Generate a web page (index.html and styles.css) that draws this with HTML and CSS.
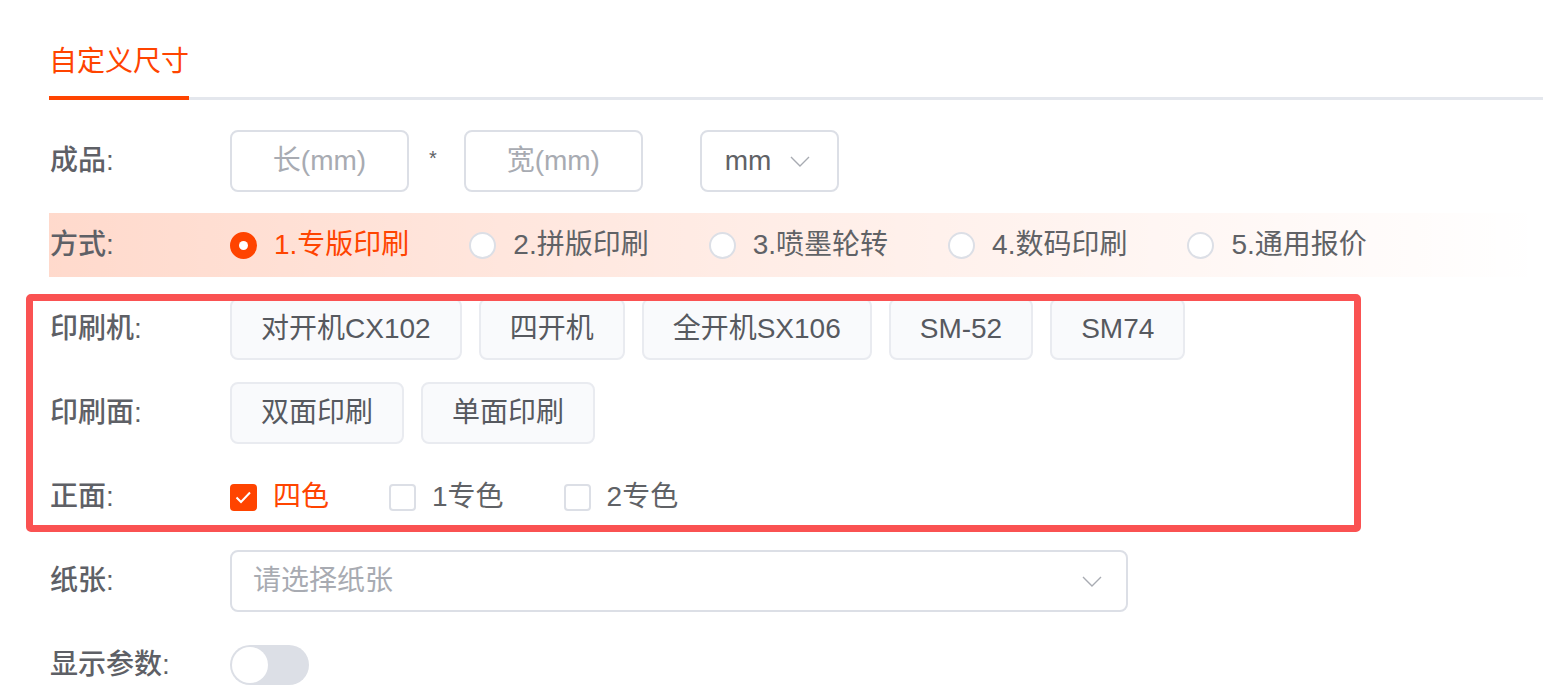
FILE: index.html
```html
<!DOCTYPE html>
<html lang="zh-CN">
<head>
<meta charset="utf-8">
<title>自定义尺寸</title>
<link rel="stylesheet" href="styles.css">
</head>
<body>
<div class="page">
  <div class="tabs">
    <div class="tab active">自定义尺寸</div>
  </div>

  <div class="form">
    <div class="row">
      <div class="label">成品:</div>
      <div class="field">
        <div class="input center"><span class="ph">长(mm)</span></div>
        <span class="star">*</span>
        <div class="input center"><span class="ph">宽(mm)</span></div>
        <div class="select unit">
          <span class="val">mm</span>
          <svg class="chev" width="20" height="11" viewBox="0 0 20 11"><path d="M1 1l9 9 9-9" fill="none" stroke="#a8abb2" stroke-width="1.4"/></svg>
        </div>
      </div>
    </div>

    <div class="row row-mode">
      <div class="label">方式:</div>
      <div class="field">
        <label class="radio checked"><span class="dot"></span><span>1.专版印刷</span></label>
        <label class="radio"><span class="dot"></span><span>2.拼版印刷</span></label>
        <label class="radio"><span class="dot"></span><span>3.喷墨轮转</span></label>
        <label class="radio"><span class="dot"></span><span>4.数码印刷</span></label>
        <label class="radio"><span class="dot"></span><span>5.通用报价</span></label>
      </div>
    </div>

    <div class="group">
      <div class="row">
        <div class="label">印刷机:</div>
        <div class="field">
          <div class="btn">对开机CX102</div>
          <div class="btn">四开机</div>
          <div class="btn">全开机SX106</div>
          <div class="btn">SM-52</div>
          <div class="btn">SM74</div>
        </div>
      </div>
      <div class="row">
        <div class="label">印刷面:</div>
        <div class="field">
          <div class="btn">双面印刷</div>
          <div class="btn">单面印刷</div>
        </div>
      </div>
      <div class="row">
        <div class="label">正面:</div>
        <div class="field">
          <label class="check checked"><span class="box"><svg width="27" height="27" viewBox="0 0 27 27"><path d="M6.5 13.5l4.5 4.5 9-9.5" fill="none" stroke="#fff" stroke-width="2"/></svg></span><span>四色</span></label>
          <label class="check"><span class="box"></span><span>1专色</span></label>
          <label class="check"><span class="box"></span><span>2专色</span></label>
        </div>
      </div>
    </div>

    <div class="row">
      <div class="label">纸张:</div>
      <div class="field">
        <div class="select paper">
          <span class="ph">请选择纸张</span>
          <svg class="chev" width="20" height="11" viewBox="0 0 20 11"><path d="M1 1l9 9 9-9" fill="none" stroke="#a8abb2" stroke-width="1.4"/></svg>
        </div>
      </div>
    </div>

    <div class="row">
      <div class="label">显示参数:</div>
      <div class="field">
        <div class="switch"><span class="knob"></span></div>
      </div>
    </div>
  </div>
</div>
</body>
</html>
```
FILE: styles.css
```css
html, body {
  margin: 0;
  padding: 0;
  background: #ffffff;
}
body {
  font-family: "Liberation Sans", "Noto Sans CJK SC", sans-serif;
  color: #606266;
  font-size: 28px;
  overflow: hidden;
}
.page {
  margin: 0 25px 0 49px;
}
.tabs {
  margin-top: 36px;
  height: 61px;
  display: flex;
  align-items: flex-start;
  border-bottom: 3px solid #e4e7ed;
}
.tab {
  box-sizing: border-box;
  width: 140px;
  height: 64px;
  line-height: 52px;
  padding-bottom: 8px;
  padding-left: 0;
  color: #ff4400;
  font-size: 28px;
  border-bottom: 4px solid #ff4400;
}
.form {
  padding-top: 30px;
}
.row {
  display: flex;
  align-items: center;
  min-height: 62px;
  margin-bottom: 22px;
}
.label {
  width: 181px;
  flex: none;
  padding-left: 1px;
  box-sizing: border-box;
  line-height: 1;
  color: #5e6066;
  font-weight: 500;
}
.field {
  display: flex;
  align-items: center;
  line-height: 1;
}
.row-mode {
  margin-top: -1px;
  margin-bottom: 21px;
  min-height: 64px;
  background: linear-gradient(90deg, rgba(255, 68, 0, 0.2) 0%, rgba(255, 68, 0, 0.1) 45%, rgba(255, 68, 0, 0) 100%);
}
.input, .select {
  box-sizing: border-box;
  height: 62px;
  border: 2px solid #dcdfe6;
  border-radius: 8px;
  background: #fff;
  display: flex;
  align-items: center;
}
.input {
  width: 179px;
}
.center {
  justify-content: center;
}
.ph {
  color: #a8abb2;
}
.star {
  font-size: 20px;
  margin: -6px 27px 0 20px;
  color: #606266;
}
.unit {
  width: 139px;
  margin-left: 57px;
  padding: 0 27px 0 23px;
}
.unit .val {
  color: #606266;
}
.chev {
  margin-left: auto;
  display: block;
}
.paper {
  width: 898px;
  padding: 0 24px 0 21px;
}
.radio {
  display: flex;
  align-items: center;
  margin-right: 60px;
  color: #606266;
}
.radio .dot {
  box-sizing: border-box;
  width: 27px;
  height: 27px;
  border-radius: 50%;
  border: 2px solid #dcdfe6;
  background: #fff;
  margin-right: 17px;
  position: relative;
}
.radio.checked {
  color: #ff4400;
}
.radio.checked .dot {
  background: #ff4400;
  border-color: #ff4400;
}
.radio.checked .dot::after {
  content: "";
  position: absolute;
  left: 50%;
  top: 50%;
  width: 9px;
  height: 9px;
  margin: -4.5px 0 0 -4.5px;
  border-radius: 50%;
  background: #fff;
}
.group {
  position: relative;
  display: flex;
  flex-direction: column;
  gap: 22px;
  margin-bottom: 22px;
}
.group .row {
  margin-bottom: 0;
}
.group::after {
  content: "";
  position: absolute;
  top: -4px;
  left: -23px;
  right: 182px;
  bottom: -4px;
  border: 7px solid #fa5252;
  border-radius: 5px;
  pointer-events: none;
}
.btn {
  box-sizing: border-box;
  height: 62px;
  padding: 0 29px;
  border: 2px solid #e9ebf0;
  border-radius: 8px;
  background: #f9fafc;
  display: flex;
  align-items: center;
  margin-right: 17px;
  color: #56595f;
  font-weight: 400;
}
.check {
  display: flex;
  align-items: center;
  margin-right: 60px;
  color: #606266;
}
.check .box {
  box-sizing: border-box;
  width: 27px;
  height: 27px;
  border: 2px solid #dcdfe6;
  border-radius: 4px;
  background: #fff;
  margin-right: 16px;
  position: relative;
}
.check .box svg {
  position: absolute;
  left: -2px;
  top: -2px;
}
.check.checked {
  color: #ff4400;
}
.check.checked .box {
  background: #ff4400;
  border-color: #ff4400;
}
.switch {
  box-sizing: border-box;
  width: 79px;
  height: 40px;
  border-radius: 20px;
  background: #dcdfe6;
  padding: 2px;
  display: flex;
  align-items: center;
}
.knob {
  width: 36px;
  height: 36px;
  border-radius: 50%;
  background: #fff;
}
```
